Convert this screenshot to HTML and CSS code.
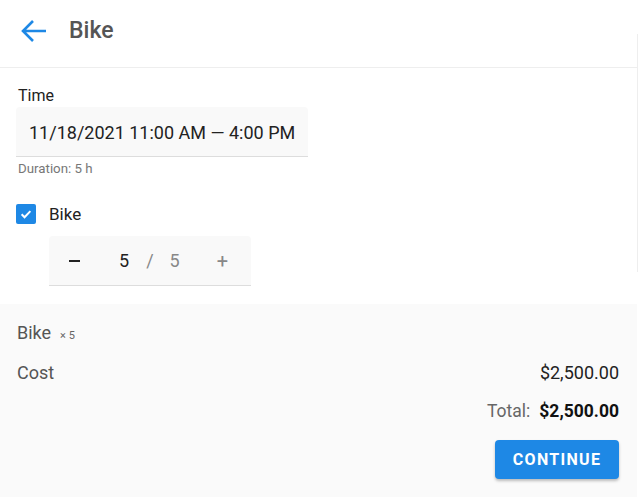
FILE: index.html
```html
<!DOCTYPE html>
<html>
<head>
<meta charset="utf-8">
<link rel="stylesheet" href="styles.css">
</head>
<body>
<div class="page">
  <header class="header">
    <svg class="back" width="28" height="24" viewBox="0 0 28 24" aria-hidden="true">
      <path d="M3 12 H26 M13 2 L3 12 L13 22" fill="none" stroke="#1e88e5" stroke-width="2.6" stroke-linecap="butt" stroke-linejoin="miter"/>
    </svg>
    <h1 class="title">Bike</h1>
  </header>
  <main class="content">
    <div class="label">Time</div>
    <div class="field">11/18/2021 11:00 AM — 4:00 PM</div>
    <div class="hint">Duration: 5 h</div>
    <div class="check-row">
      <span class="checkbox">
        <svg width="14" height="14" viewBox="0 0 24 24" aria-hidden="true"><path d="M4.5 12.5 L9.5 17.5 L19.5 7" fill="none" stroke="#fff" stroke-width="3.4"/></svg>
      </span>
      <span class="check-label">Bike</span>
    </div>
    <div class="stepper">
      <span class="minus"></span>
      <span class="count">5</span>
      <span class="slash">/</span>
      <span class="max">5</span>
      <span class="plus">+</span>
    </div>
  </main>
  <section class="summary">
    <div class="item"><span class="item-name">Bike</span><span class="qty">× 5</span></div>
    <div class="row cost"><span>Cost</span><span class="price">$2,500.00</span></div>
    <div class="row total"><span class="total-label">Total:</span><span class="total-value">$2,500.00</span></div>
    <div class="actions"><button class="btn">CONTINUE</button></div>
  </section>
  <div class="scrollline"></div>
</div>
</body>
</html>
```

FILE: styles.css
```css
* { box-sizing: border-box; }
html, body { margin: 0; padding: 0; background: #fff; }
body { font-family: Roboto, "Noto Sans", sans-serif; color: #222; }
.page { width: 638px; height: 497px; position: relative; overflow: hidden; }
.header {
  width: 637px; height: 68px; border-bottom: 1px solid #eeeeee;
  display: flex; align-items: center; padding-left: 20px;
}
.back { display: block; margin-top: -5px; }
.title { margin: 0 0 0 21px; font-size: 23px; font-weight: 500; color: #555; margin-top: -7px; }
.content { padding: 18px 16px 0; height: 236px; }
.label { font-size: 16px; line-height: 20px; margin-left: 2px; color: #222; }
.field {
  margin-top: 1px; width: 292px; height: 50px; background: #f9f9f9;
  border-bottom: 1px solid #dddddd; border-radius: 4px 4px 0 0;
  display: flex; align-items: center; padding-left: 13px; padding-top: 1px; font-size: 18px; color: #222;
}
.hint { font-size: 13.3px; line-height: 15px; margin-top: 4px; margin-left: 2px; color: #777; }
.check-row { display: flex; align-items: center; margin-top: 28px; height: 20px; }
.checkbox {
  width: 20px; height: 20px; background: #1e88e5; border-radius: 2px;
  display: flex; align-items: center; justify-content: center;
}
.check-label { margin-left: 13px; font-size: 17px; color: #222; }
.stepper {
  margin: 12px 0 0 33px; width: 202px; height: 50px; background: #f9f9f9;
  border-bottom: 1px solid #dddddd; border-radius: 4px 4px 0 0;
  display: flex; align-items: center; font-size: 18px; color: #222;
}
.minus { margin-left: 20px; width: 11px; height: 2px; background: #222; }
.count { margin-left: 39px; }
.slash { margin-left: 17px; color: #888; }
.max { margin-left: 16px; color: #888; }
.plus { margin-left: 37px; color: #888; font-size: 20px; }
.summary {
  width: 637px; height: 193px; background: #fafafa; padding: 18px 18px 0 17px;
}
.item { display: flex; align-items: baseline; height: 24px; }
.item-name { font-size: 18px; color: #555; }
.qty { font-size: 11px; color: #666; margin-left: 9px; }
.row { display: flex; justify-content: space-between; align-items: baseline; }
.cost { margin-top: 16px; font-size: 18px; color: #555; }
.price { color: #222; }
.total { justify-content: flex-end; margin-top: 18px; font-size: 17.5px; }
.total-label { color: #666; }
.total-value { margin-left: 9px; font-weight: 700; color: #111; }
.actions { display: flex; justify-content: flex-end; margin-top: 19px; }
.btn {
  width: 124px; height: 39px; background: #1e88e5; color: #fff; border: 0;
  border-radius: 4px; font-family: Roboto, sans-serif; font-size: 16px; font-weight: 700;
  letter-spacing: 1.3px; box-shadow: 0 2px 3px rgba(0,0,0,0.25); padding: 0;
}
.scrollline { position: absolute; left: 637px; top: 34px; width: 1px; height: 238px; background: #eeeeee; }
```
